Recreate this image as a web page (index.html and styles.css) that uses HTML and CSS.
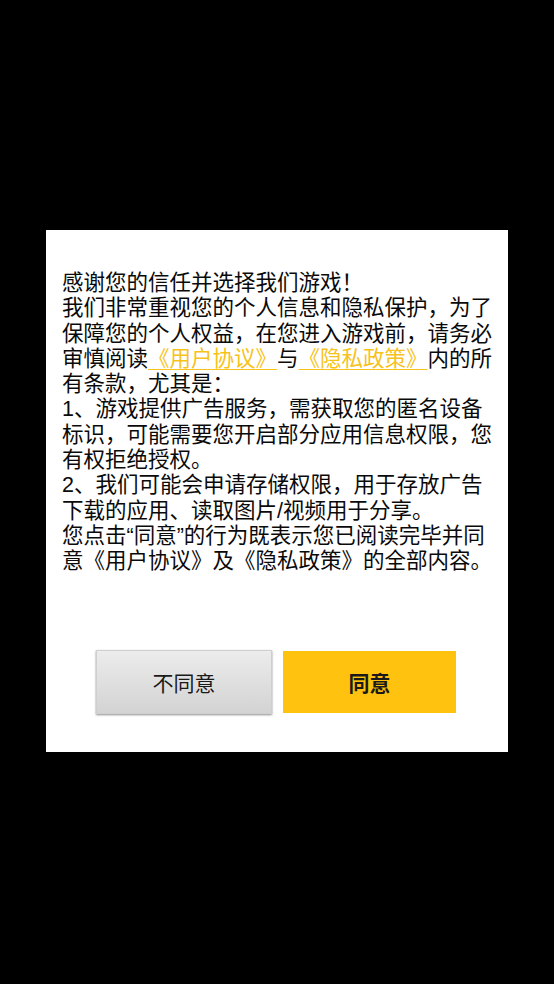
FILE: index.html
```html
<!DOCTYPE html>
<html lang="zh-CN">
<head>
    <meta charset="UTF-8">
    <title>用户协议与隐私政策</title>
    <link rel="stylesheet" href="styles.css">
</head>
<body>
    <div class="dialog">
        <div class="dialog-text">
            <p>感谢您的信任并选择我们游戏！</p>
            <p>我们非常重视您的个人信息和隐私保护，为了保障您的个人权益，在您进入游戏前，请务必审慎阅读<a class="link" href="#">《用户协议》</a>与<a class="link" href="#">《隐私政策》</a>内的所有条款，尤其是：</p>
            <p>1、游戏提供广告服务，需获取您的匿名设备标识，可能需要您开启部分应用信息权限，您有权拒绝授权。</p>
            <p>2、我们可能会申请存储权限，用于存放广告下载的应用、读取图片/视频用于分享。</p>
            <p>您点击“同意”的行为既表示您已阅读完毕并同意《用户协议》及《隐私政策》的全部内容。</p>
        </div>
        <div class="dialog-buttons">
            <button class="btn btn-disagree">不同意</button>
            <button class="btn btn-agree">同意</button>
        </div>
    </div>
</body>
</html>
```

FILE: styles.css
```css
html, body {
    height: 100%;
}
body {
    margin: 0;
    background-color: #000;
    font-family: 'Liberation Sans', 'Noto Sans CJK SC', sans-serif;
    display: flex;
    justify-content: center;
    align-items: center;
}
.dialog {
    width: 462px;
    height: 522px;
    box-sizing: border-box;
    background-color: #fff;
    padding: 41px 15px 38px 16px;
    display: flex;
    flex-direction: column;
    margin-top: -2px;
}
.dialog-text {
    font-size: 21.5px;
    line-height: 25.3px;
    color: #0a0a0a;
}
.dialog-text p {
    margin: 0;
}
.link {
    color: #f7c21a;
    text-decoration: underline;
    text-underline-offset: 3px;
    text-decoration-thickness: 1px;
}
.dialog-buttons {
    margin-top: auto;
    display: flex;
    justify-content: center;
    gap: 11px;
    padding-right: 3px;
}
.btn {
    height: 64px;
    font-family: 'Liberation Sans', 'Noto Sans CJK SC', sans-serif;
    font-size: 21px;
    color: #1a1a1a;
    border: none;
    cursor: pointer;
}
.btn-disagree {
    width: 176px;
    background: linear-gradient(#ececec, #d3d3d3);
    border: 1px solid #cfcfcf;
    box-shadow: 0 1px 2px rgba(0, 0, 0, 0.45);
}
.btn-agree {
    width: 173px;
    height: 62px;
    margin-top: 1px;
    background-color: #ffc20e;
    font-weight: bold;
}
```
